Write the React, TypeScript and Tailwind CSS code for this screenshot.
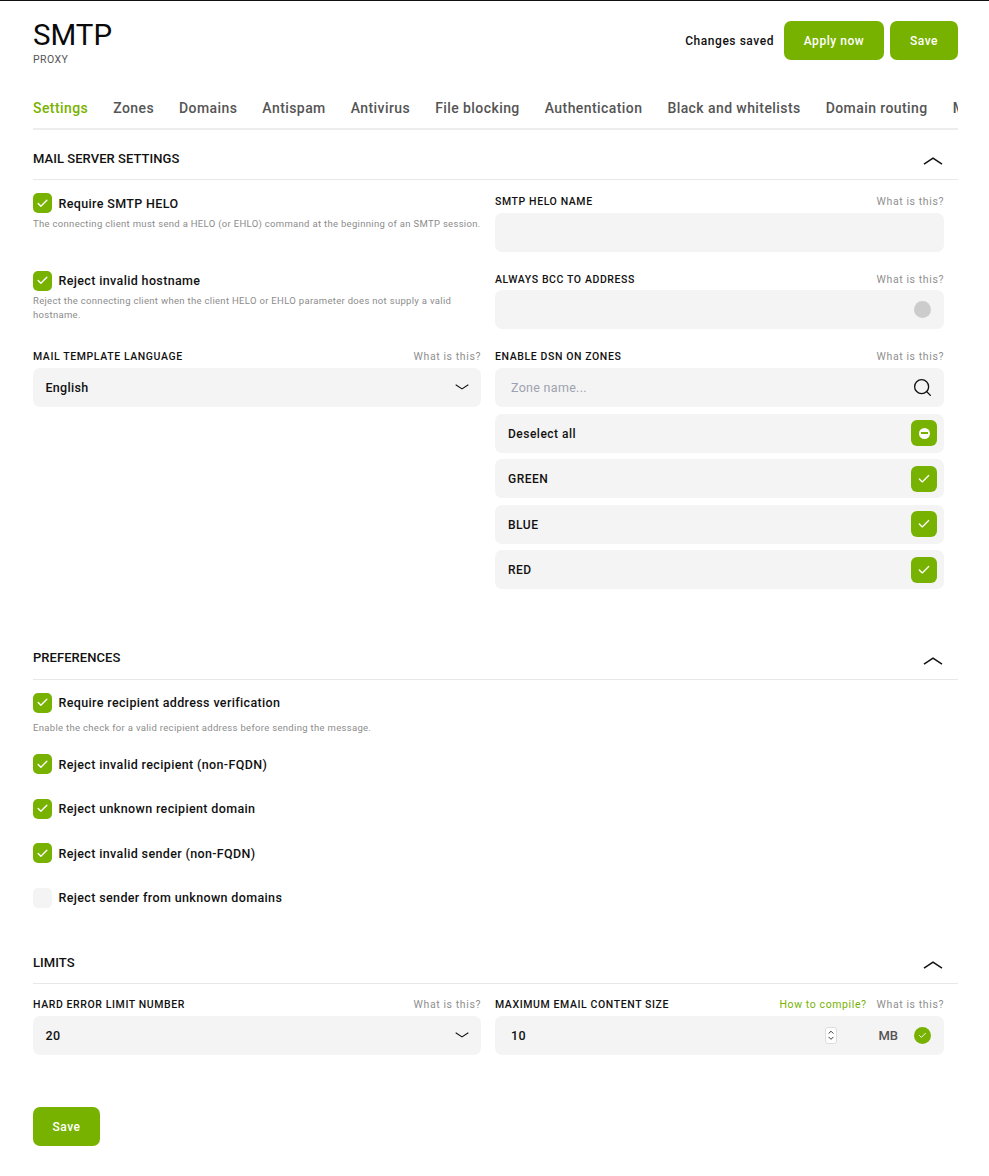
import { Check, ChevronDown, ChevronUp, Search } from "lucide-react"
import type { ReactNode } from "react"

const tabs = ["Settings", "Zones", "Domains", "Antispam", "Antivirus", "File blocking", "Authentication", "Black and whitelists", "Domain routing", "Mail routing"]

function Chevron({ className }: { className?: string }) {
  return (
    <svg width="20" height="8" viewBox="0 0 20 8" fill="none" stroke="currentColor" strokeWidth="1.5" className={className}>
      <path d="M1 7.2 10 1.2 19 7.2" />
    </svg>
  )
}

function SectionHead({ title }: { title: string }) {
  return (
    <div className="flex h-[41px] items-center justify-between border-b border-[#e8e8e8] pr-[15px]">
      <span className="pb-[1px] text-[13px] font-[465] tracking-[0.05px] text-[#111]">{title}</span>
      <Chevron className="mt-[4px] text-[#111]" />
    </div>
  )
}

function Checkbox({ checked = true }: { checked?: boolean }) {
  return (
    <span className={`flex h-5 w-[19px] shrink-0 items-center justify-center rounded-[5px] ${checked ? "bg-[#78b200]" : "bg-[#f4f4f4]"}`}>
      {checked && <Check size={13} strokeWidth={2.5} className="text-white" />}
    </span>
  )
}

function CheckRow({ label, hint, hintClass }: { label: string; hint?: string; hintClass?: string }) {
  const checked = label !== "Reject sender from unknown domains"
  return (
    <div>
      <div className="flex h-5 items-center gap-[6.5px]">
        <Checkbox checked={checked} />
        <span className="pt-[2px] text-[12.5px] font-[465] tracking-[0.36px] text-[#111]">{label}</span>
      </div>
      {hint && <p className={`text-[9.5px] leading-[14px] tracking-[0.31px] text-[#8c8c8c] ${hintClass}`}>{hint}</p>}
    </div>
  )
}

function Field({ label, extra, children }: { label: string; extra?: ReactNode; children: ReactNode }) {
  return (
    <div>
      <div className="flex h-[19.5px] items-start justify-between pt-[3px] text-[10.5px] leading-[12px] tracking-[0.6px]">
        <span className="font-[465] text-[#111]">{label}</span>
        <span className="flex gap-[10px] text-[#8f8f8f]">
          {extra}
          <span>What is this?</span>
        </span>
      </div>
      {children}
    </div>
  )
}

function Box({ children }: { children?: ReactNode }) {
  return <div className="flex h-[39px] items-center rounded-[7px] bg-[#f4f4f4]">{children}</div>
}

function ZoneRow({ label, icon }: { label: string; icon: ReactNode }) {
  return (
    <div className="flex h-[39px] items-center justify-between rounded-[7px] bg-[#f4f4f4] pl-[13px] pr-[7px]">
      <span className="pt-[1px] text-[12px] font-[465] tracking-[0.5px] text-[#111]">{label}</span>
      <span className="flex h-[26px] w-[26px] items-center justify-center rounded-[6px] bg-[#78b200]">{icon}</span>
    </div>
  )
}

function GreenButton({ label, className }: { label: string; className: string }) {
  return (
    <button className={`h-[39px] rounded-[7px] bg-[#78b200] pt-[1px] text-[12px] font-[465] tracking-[0.55px] text-white ${className}`}>{label}</button>
  )
}

export default function App() {
  return (
    <div className="min-h-[1176px] border-t border-[#111] bg-white pl-[33px] pr-[31px] font-['Roboto',sans-serif]">
      <header className="flex items-start justify-between pt-5">
        <div>
          <h1 className="pt-[1px] text-[29.5px] font-normal leading-[26px] text-[#0a0a0a]">SMTP</h1>
          <div className="mt-[6px] text-[10.5px] leading-[12px] tracking-[0.4px] text-[#555]">PROXY</div>
        </div>
        <div className="flex items-center">
          <span className="mr-[10px] text-[12px] font-[465] tracking-[0.55px] text-[#111]">Changes saved</span>
          <GreenButton label="Apply now" className="w-[100px]" />
          <GreenButton label="Save" className="ml-[6px] w-[68px]" />
        </div>
      </header>

      <nav className="mt-[23px] flex h-[41px] gap-[25px] overflow-hidden border-b-2 border-[#ededed]">
        {tabs.map((tab, i) => (
          <span
            key={tab}
            className={`-mb-[2px] h-[41px] whitespace-nowrap pt-[10px] text-[14px] font-[465] leading-[18px] tracking-[0.42px] ${i === 0 ? "border-b-2 border-[#78b200] text-[#78b200]" : "text-[#555]"}`}
          >
            {tab}
          </span>
        ))}
      </nav>

      <section className="mt-[9px]">
        <SectionHead title="MAIL SERVER SETTINGS" />
        <div className="mt-[13px] grid grid-cols-[448px_449px] gap-x-[14px] gap-y-[19px]">
          <CheckRow
            label="Require SMTP HELO"
            hint="The connecting client must send a HELO (or EHLO) command at the beginning of an SMTP session."
            hintClass="mt-[4px] whitespace-nowrap"
          />
          <Field label="SMTP HELO NAME">
            <Box />
          </Field>
          <CheckRow
            label="Reject invalid hostname"
            hint="Reject the connecting client when the client HELO or EHLO parameter does not supply a valid hostname."
            hintClass="mt-[3px] w-[430px]"
          />
          <Field label="ALWAYS BCC TO ADDRESS">
            <Box>
              <span className="ml-auto mr-[13px] h-[17px] w-[17px] rounded-full bg-[#cccccc]" />
            </Box>
          </Field>
          <Field label="MAIL TEMPLATE LANGUAGE">
            <Box>
              <span className="pl-[12.5px] pt-[2px] text-[12.5px] font-[465] tracking-[0.3px] text-[#111]">English</span>
              <Chevron className="ml-auto mr-[12px] h-[6px] w-[14px] rotate-180 text-[#111]" />
            </Box>
          </Field>
          <Field label="ENABLE DSN ON ZONES">
            <Box>
              <span className="pl-[16px] pt-[2px] text-[12.5px] tracking-[0.3px] text-[#9ca3af]">Zone name...</span>
              <Search size={21} strokeWidth={1.5} className="ml-auto mr-[11px] text-[#111]" />
            </Box>
            <div className="mt-[7px] flex flex-col gap-[6.5px]">
              <ZoneRow
                label="Deselect all"
                icon={
                  <span className="flex h-[11px] w-[11px] items-center justify-center rounded-full bg-white">
                    <span className="h-[2px] w-[7px] bg-[#78b200]" />
                  </span>
                }
              />
              {["GREEN", "BLUE", "RED"].map((zone) => (
                <ZoneRow key={zone} label={zone} icon={<Check size={14} strokeWidth={2.25} className="text-white" />} />
              ))}
            </div>
          </Field>
        </div>
      </section>

      <section className="mt-[49.5px]">
        <SectionHead title="PREFERENCES" />
        <div className="mt-[13px] flex flex-col">
          <CheckRow
            label="Require recipient address verification"
            hint="Enable the check for a valid recipient address before sending the message."
            hintClass="mt-[8px]"
          />
          <div className="mt-[19.5px] flex flex-col gap-[24.5px]">
            <CheckRow label="Reject invalid recipient (non-FQDN)" />
            <CheckRow label="Reject unknown recipient domain" />
            <CheckRow label="Reject invalid sender (non-FQDN)" />
            <CheckRow label="Reject sender from unknown domains" />
          </div>
        </div>
      </section>

      <section className="mt-[35.5px]">
        <SectionHead title="LIMITS" />
        <div className="mt-[12px] grid grid-cols-[448px_449px] gap-x-[14px]">
          <Field label="HARD ERROR LIMIT NUMBER">
            <Box>
              <span className="pl-[12.5px] pt-[2px] text-[12.5px] font-[465] tracking-[0.3px] text-[#111]">20</span>
              <Chevron className="ml-auto mr-[12px] h-[6px] w-[14px] rotate-180 text-[#111]" />
            </Box>
          </Field>
          <Field label="MAXIMUM EMAIL CONTENT SIZE" extra={<span className="text-[#78b200]">How to compile?</span>}>
            <Box>
              <span className="pl-[16px] pt-[2px] text-[12.5px] font-[465] tracking-[0.3px] text-[#111]">10</span>
              <span className="ml-auto mr-[41px] flex h-[17px] w-[12px] flex-col items-center justify-center rounded-[3px] border border-[#ddd] bg-white text-[#222]">
                <ChevronUp size={10} strokeWidth={2.5} className="-mb-[1px]" />
                <ChevronDown size={10} strokeWidth={2.5} className="-mt-[1px]" />
              </span>
              <span className="mr-[16px] pt-[2px] text-[13px] font-[465] text-[#555]">MB</span>
              <span className="mr-[13px] flex h-[17px] w-[17px] items-center justify-center rounded-full bg-[#78b200]">
                <Check size={9} strokeWidth={2.5} className="text-white" />
              </span>
            </Box>
          </Field>
        </div>
      </section>

      <div className="mt-[52px] pb-[30px]">
        <GreenButton label="Save" className="w-[67px]" />
      </div>
    </div>
  )
}
